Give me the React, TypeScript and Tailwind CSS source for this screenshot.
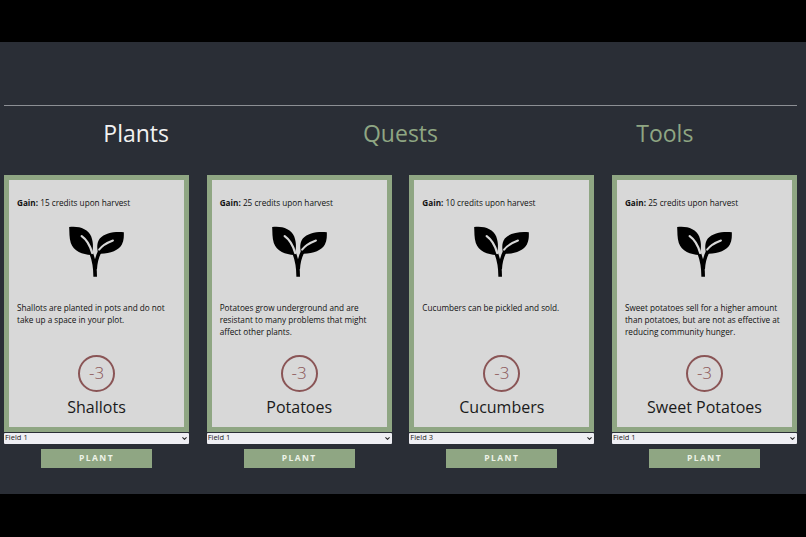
import { ChevronDown } from "lucide-react";

const plants = [
  { gain: "15", text: "Shallots are planted in pots and do not take up a space in your plot.", name: "Shallots", field: "Field 1" },
  { gain: "25", text: "Potatoes grow underground and are resistant to many problems that might affect other plants.", name: "Potatoes", field: "Field 1" },
  { gain: "10", text: "Cucumbers can be pickled and sold.", name: "Cucumbers", field: "Field 3" },
  { gain: "25", text: "Sweet potatoes sell for a higher amount than potatoes, but are not as effective at reducing community hunger.", name: "Sweet Potatoes", field: "Field 1" },
];

function Sprout() {
  return (
    <svg viewBox="45 25 190 170" className="w-[63px] h-[56px] block" aria-hidden="true">
      <path d="M57 37 C85 33 115 42 124 66 C132 88 130 108 124 122 C98 122 70 110 62 86 C57 70 58 52 57 37 Z" fill="#000" />
      <path d="M223 53 C196 50 165 55 150 72 C140 85 141 105 146 118 C178 120 208 108 217 90 C224 76 223 65 223 53 Z" fill="#000" />
      <path d="M136 188 C136 160 134 140 122 112 M136 165 C137 145 140 130 150 112" fill="none" stroke="#000" strokeWidth="11" />
      <path d="M95 65 C108 74 120 92 127 116" fill="none" stroke="#d8d8d8" strokeWidth="7" strokeLinecap="round" />
      <path d="M190 78 C174 84 158 92 148 106" fill="none" stroke="#d8d8d8" strokeWidth="6" strokeLinecap="round" />
    </svg>
  );
}

function PlantColumn({ p }: { p: (typeof plants)[number] }) {
  return (
    <div className="flex flex-col items-center">
      <div className="w-full h-[257px] border-[5px] border-[#8fa683] bg-[#d8d8d8] px-[8px] flex flex-col text-[#111]">
        <p className="mt-[17px] text-[8.2px] leading-[12px]">
          <b>Gain:</b> {p.gain} credits upon harvest
        </p>
        <div className="mt-[14px] flex justify-center">
          <Sprout />
        </div>
        <p className="mt-[23px] h-[47px] text-[8.2px] leading-[12px] w-full">{p.text}</p>
        <div className="mt-[6px] self-center w-[37px] h-[37px] rounded-full border-2 border-[#8a5556] flex items-center justify-center text-[17px] text-[#8a5556] font-light pb-[2px]">
          -3
        </div>
        <div className="mt-[3px] text-center text-[16px] leading-[24px] text-[#1a1a1a]">{p.name}</div>
      </div>
      <div className="relative mt-[1px] w-full h-[11px]">
        <select
          defaultValue={p.field}
          className="appearance-none block w-full h-[11px] pl-[1px] pb-[2px] bg-[#eeeef3] text-[7.5px] leading-[9px] text-[#222] rounded-[1px] outline-none"
        >
          <option>Field 1</option>
          <option>Field 2</option>
          <option>Field 3</option>
        </select>
        <ChevronDown className="absolute right-[1px] top-[2px] w-[7px] h-[7px] text-[#222] pointer-events-none" strokeWidth={3.5} />
      </div>
      <button className="mt-[5px] w-[111px] h-[19px] bg-[#8fa683] text-[#eef3e8] text-[8.5px] font-bold tracking-[0.17em] text-center">
        PLANT
      </button>
    </div>
  );
}

export default function App() {
  return (
    <div className="h-[537px] w-[806px] overflow-hidden bg-black pt-[42px]" style={{ fontFamily: '"Open Sans", sans-serif' }}>
      <div className="h-[452px] w-[806px] bg-[#2a2e36] pl-[4px] pr-[9px] pt-[63px]">
        <div className="h-px bg-[#8c8f94]" />
        <div className="grid grid-cols-3 mt-[13px] h-[28px] text-[23px] leading-[28px] text-center">
          <div className="text-[#f2f2f2]">Plants</div>
          <div className="text-[#8fa683]">Quests</div>
          <div className="text-[#8fa683]">Tools</div>
        </div>
        <div className="grid grid-cols-4 gap-x-[17.6px] mt-[28px]">
          {plants.map((p) => (
            <PlantColumn key={p.name} p={p} />
          ))}
        </div>
      </div>
    </div>
  );
}
